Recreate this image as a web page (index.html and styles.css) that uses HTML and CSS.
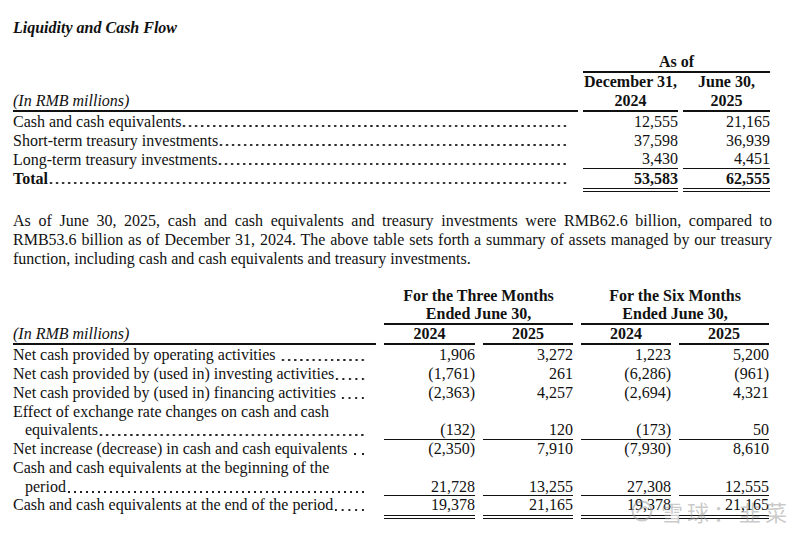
FILE: index.html
```html
<!DOCTYPE html>
<html>
<head>
<meta charset="utf-8">
<link rel="stylesheet" href="styles.css">
</head>
<body>
<div class="page">
  <h1 class="title">Liquidity and Cash Flow</h1>

  <div class="tbl1">
    <div class="cell"></div>
    <div class="hd span2 rule">As of</div>

    <div class="cap rule">(In RMB millions)</div>
    <div class="hd hd2 rule">December 31,<br>2024</div>
    <div class="hd hd2 rule">June 30,<br>2025</div>

    <div class="lbl">Cash and cash equivalents<span class="dots"></span></div>
    <div class="num">12,555</div>
    <div class="num">21,165</div>

    <div class="lbl">Short-term treasury investments<span class="dots"></span></div>
    <div class="num">37,598</div>
    <div class="num">36,939</div>

    <div class="lbl">Long-term treasury investments<span class="dots"></span></div>
    <div class="num ul">3,430</div>
    <div class="num ul">4,451</div>

    <div class="lbl bold">Total<span class="dots"></span></div>
    <div class="num bold dbl">53,583</div>
    <div class="num bold dbl">62,555</div>
  </div>

  <p class="para">As of June 30, 2025, cash and cash equivalents and treasury investments were RMB62.6 billion, compared to RMB53.6 billion as of December 31, 2024. The above table sets forth a summary of assets managed by our treasury function, including cash and cash equivalents and treasury investments.</p>

  <div class="tbl2">
    <div class="cell"></div>
    <div class="hd span2 rule">For the Three Months<br>Ended June 30,</div>
    <div class="hd span2 rule">For the Six Months<br>Ended June 30,</div>

    <div class="cap rule">(In RMB millions)</div>
    <div class="hd rule">2024</div>
    <div class="hd rule">2025</div>
    <div class="hd rule">2024</div>
    <div class="hd rule">2025</div>

    <div class="lbl first">Net cash provided by operating activities<span class="dots sp"></span></div>
    <div class="num first">1,906</div>
    <div class="num first">3,272</div>
    <div class="num first">1,223</div>
    <div class="num first">5,200</div>

    <div class="lbl">Net cash provided by (used in) investing activities<span class="dots"></span></div>
    <div class="num">(1,761)</div>
    <div class="num">261</div>
    <div class="num">(6,286)</div>
    <div class="num">(961)</div>

    <div class="lbl">Net cash provided by (used in) financing activities<span class="dots sp"></span></div>
    <div class="num">(2,363)</div>
    <div class="num">4,257</div>
    <div class="num">(2,694)</div>
    <div class="num">4,321</div>

    <div class="lbl">Effect of exchange rate changes on cash and cash</div>
    <div class="num"></div>
    <div class="num"></div>
    <div class="num"></div>
    <div class="num"></div>

    <div class="lbl ind">equivalents<span class="dots"></span></div>
    <div class="num ul">(132)</div>
    <div class="num ul">120</div>
    <div class="num ul">(173)</div>
    <div class="num ul">50</div>

    <div class="lbl">Net increase (decrease) in cash and cash equivalents<span class="dots sp"></span></div>
    <div class="num">(2,350)</div>
    <div class="num">7,910</div>
    <div class="num">(7,930)</div>
    <div class="num">8,610</div>

    <div class="lbl">Cash and cash equivalents at the beginning of the</div>
    <div class="num"></div>
    <div class="num"></div>
    <div class="num"></div>
    <div class="num"></div>

    <div class="lbl ind">period<span class="dots"></span></div>
    <div class="num ul">21,728</div>
    <div class="num ul">13,255</div>
    <div class="num ul">27,308</div>
    <div class="num ul">12,555</div>

    <div class="lbl">Cash and cash equivalents at the end of the period<span class="dots"></span></div>
    <div class="num dbl">19,378</div>
    <div class="num dbl">21,165</div>
    <div class="num dbl">19,378</div>
    <div class="num dbl">21,165</div>
  </div>

  <div class="watermark">
    <svg class="wm-logo" width="22" height="22" viewBox="0 0 22 22"><circle cx="11" cy="11" r="9.5" fill="none" stroke="currentColor" stroke-width="2"/><path d="M6 13 C8 8 13 6 16 8" fill="none" stroke="currentColor" stroke-width="2"/></svg>
    <span class="wm-text">雪球：韭菜</span>
  </div>
</div>
</body>
</html>
```

FILE: styles.css
```css
html, body {
  margin: 0;
  padding: 0;
  background: #fff;
}

body {
  font-family: "Liberation Serif", "Times New Roman", serif;
  font-size: 16px;
  color: #111;
}

.page {
  position: relative;
  box-sizing: border-box;
  width: 800px;
  height: 536px;
  padding: 18px 28px 0 13px;
  overflow: hidden;
}

.title {
  margin: 0;
  font-size: 16px;
  font-weight: bold;
  font-style: italic;
  line-height: 19px;
}

.tbl1 {
  display: grid;
  grid-template-columns: 565px 95px 87px;
  column-gap: 5px;
  margin-top: 16px;
  line-height: 19px;
}

.tbl2 {
  display: grid;
  grid-template-columns: 363px 91px 90px 90px 90px;
  column-gap: 8px;
  margin-top: 18.5px;
  line-height: 18.75px;
}

.hd {
  font-weight: bold;
  text-align: center;
  line-height: 18px;
}

.hd2 {
  line-height: 18.5px;
}

.span2 {
  grid-column: span 2;
}

.rule {
  border-bottom: 2px solid #111;
}

.cap {
  font-style: italic;
  align-self: end;
  line-height: 18px;
}

.tbl1 .cap {
  line-height: 19px;
}

.lbl {
  display: flex;
  padding-right: 10px;
  white-space: nowrap;
}

.ind {
  padding-left: 12px;
}

.dots {
  flex: 1 1 0;
  min-width: 0;
  margin-left: 0;
  background-image: radial-gradient(circle at 3px 14px, #222 0.9px, rgba(0, 0, 0, 0) 1.4px);
  background-size: 6px 100%;
  background-repeat: space no-repeat;
  background-position: left top;
}

.dots.sp {
  margin-left: 4px;
}

.num {
  text-align: right;
}

.first {
  margin-top: 1.5px;
}

.ul {
  border-bottom: 1.5px solid #111;
}

.tbl1 .ul {
  line-height: 17.5px;
}

.tbl2 .ul {
  line-height: 17.25px;
}

.dbl {
  border-bottom: 4px double #111;
}

.bold {
  font-weight: bold;
}

.para {
  margin: 18.5px 0 0 0;
  line-height: 19.25px;
  text-align: justify;
}

.watermark {
  position: absolute;
  left: 631px;
  top: 499px;
  display: flex;
  align-items: center;
  gap: 8px;
  color: rgba(150, 150, 150, 0.5);
  pointer-events: none;
}

.wm-text {
  font-family: "Noto Sans CJK SC", "Noto Sans", sans-serif;
  font-size: 22px;
  letter-spacing: 4px;
  line-height: 24px;
}
```
